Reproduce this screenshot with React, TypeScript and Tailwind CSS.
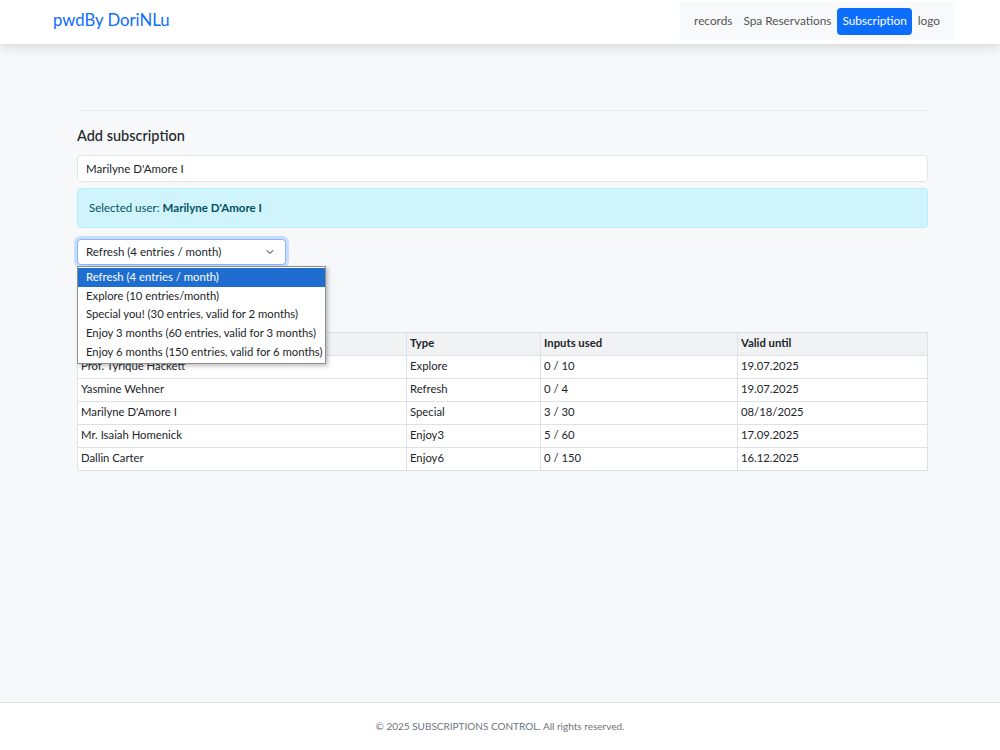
import { ChevronDown } from "lucide-react"

const plans = [
  "Refresh (4 entries / month)",
  "Explore (10 entries/month)",
  "Special you! (30 entries, valid for 2 months)",
  "Enjoy 3 months (60 entries, valid for 3 months)",
  "Enjoy 6 months (150 entries, valid for 6 months)",
]

const rows = [
  { name: "Prof. Tyrique Hackett", type: "Explore", used: "0 / 10", until: "19.07.2025" },
  { name: "Yasmine Wehner", type: "Refresh", used: "0 / 4", until: "19.07.2025" },
  { name: "Marilyne D'Amore I", type: "Special", used: "3 / 30", until: "08/18/2025" },
  { name: "Mr. Isaiah Homenick", type: "Enjoy3", used: "5 / 60", until: "17.09.2025" },
  { name: "Dallin Carter", type: "Enjoy6", used: "0 / 150", until: "16.12.2025" },
]

export default function App() {
  return (
    <div className="flex min-h-screen flex-col bg-[#f7f8fa] text-[#212529] font-['Lato','Noto_Sans',sans-serif]">
      {/* navbar */}
      <header className="relative z-10 flex h-[44px] items-start justify-between bg-white pl-[53px] pr-[47px] shadow-[0_4px_10px_rgba(0,0,0,0.12)]">
        <a className="mt-[8px] text-[16.7px] text-[#0d6efd]">pwdBy DoriNLu</a>
        <nav className="mt-[2px] flex h-[38px] items-center gap-[1px] bg-[#f8f9fa] pl-[9px] pr-[8px] text-[11.8px] text-[#555]">
          <span className="px-[5px]">records</span>
          <span className="px-[5px]">Spa Reservations</span>
          <span className="flex h-[27px] items-center rounded-[4px] bg-[#0d6efd] px-[5px] text-white">Subscription</span>
          <span className="px-[5px]">logo</span>
        </nav>
      </header>

      <main className="flex-1 pl-[77px] pr-[72px] pt-[66px]">
        <hr className="border-t border-[#e9eaec]" />
        <h2 className="mt-[14px] text-[14.5px] font-medium">Add subscription</h2>

        <input
          className="mt-[8px] block h-[27px] w-full rounded-[4px] border border-[#e3e5e8] bg-white px-[8px] text-[11.5px] outline-none"
          defaultValue="Marilyne D'Amore I"
        />

        <div className="mt-[6px] flex h-[40px] items-center rounded-[4px] border border-[#b6effb] bg-[#cff4fc] px-[11px] text-[11.5px] text-[#055160]">
          Selected user:&nbsp;<b className="font-bold">Marilyne D'Amore I</b>
        </div>

        <div className="relative mt-[11px] w-[209px]">
          <div className="flex h-[26px] items-center justify-between rounded-[4px] border border-[#86b7fe] bg-white pl-[8px] pr-[9px] text-[11.5px] shadow-[0_0_0_3px_rgba(13,110,253,0.2)]">
            <span>Refresh (4 entries / month)</span>
            <ChevronDown className="h-[12px] w-[12px]" strokeWidth={2} />
          </div>
          <ul className="absolute left-0 top-[27px] z-20 w-[249px] whitespace-nowrap border border-[#8e8e8e] bg-white py-[1px] text-[11.3px] shadow-[2px_2px_4px_rgba(0,0,0,0.25)]">
            {plans.map((p, i) => (
              <li
                key={p}
                className={
                  i === 0
                    ? "h-[18.8px] bg-[#1f6ecf] px-[8px] leading-[18.8px] text-white"
                    : "h-[18.8px] px-[8px] leading-[18.8px]"
                }
              >
                {p}
              </li>
            ))}
          </ul>
        </div>

        <table className="mt-[67px] w-full border-collapse text-[11.3px]">
          <thead>
            <tr className="bg-[#f1f2f4]">
              <th className="h-[23px] w-[329px] border border-[#dee2e6] px-[3px] text-left font-bold">Name</th>
              <th className="h-[23px] w-[134px] border border-[#dee2e6] px-[3px] text-left font-bold">Type</th>
              <th className="h-[23px] w-[197px] border border-[#dee2e6] px-[3px] text-left font-bold">Inputs used</th>
              <th className="h-[23px] border border-[#dee2e6] px-[3px] text-left font-bold">Valid until</th>
            </tr>
          </thead>
          <tbody className="bg-white">
            {rows.map((r) => (
              <tr key={r.name}>
                <td className="h-[23px] border border-[#dee2e6] px-[3px]">{r.name}</td>
                <td className="h-[23px] border border-[#dee2e6] px-[3px]">{r.type}</td>
                <td className="h-[23px] border border-[#dee2e6] px-[3px]">{r.used}</td>
                <td className="h-[23px] border border-[#dee2e6] px-[3px]">{r.until}</td>
              </tr>
            ))}
          </tbody>
        </table>
      </main>

      <footer className="flex h-[48px] items-center justify-center border-t border-[#dee2e6] bg-white text-[10px] text-[#6c757d]">
        © 2025 SUBSCRIPTIONS CONTROL. All rights reserved.
      </footer>
    </div>
  )
}
